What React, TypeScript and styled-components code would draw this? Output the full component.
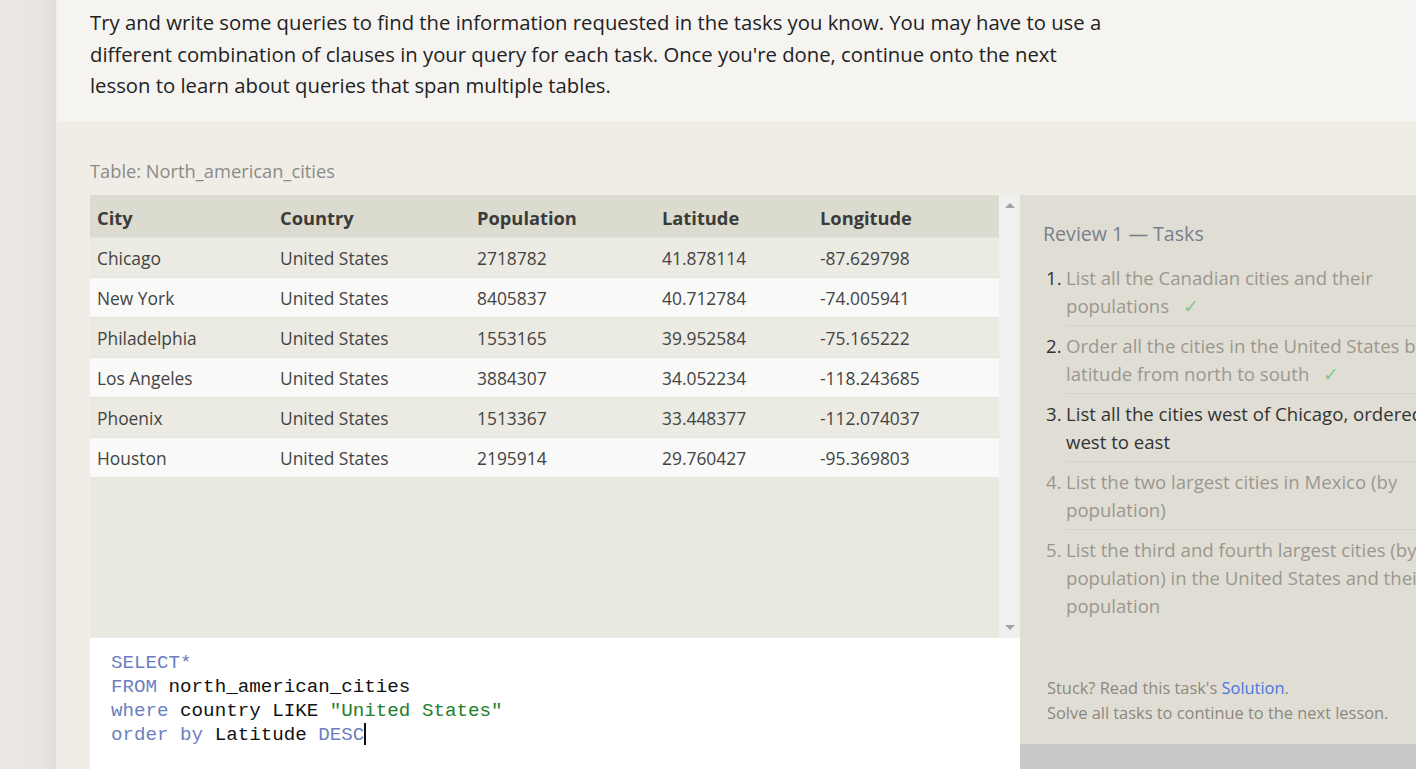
import React from "react";
import styled, { createGlobalStyle } from "styled-components";

const Global = createGlobalStyle`
  html, body { margin: 0; padding: 0; }
  body {
    background: #ebe8e5;
    overflow: hidden;
    font-family: "Open Sans", "Noto Sans", sans-serif;
  }
`;

const Page = styled.div`
  display: flex;
  width: 1416px;
  height: 769px;
  overflow: hidden;
`;

const Gutter = styled.div`
  flex: none;
  width: 56px;
  background: linear-gradient(to right, #ebe8e5 0%, #e8e5e2 70%, #e0dcd9 100%);
  border-right: 1px solid #f2f0ed;
`;

const Main = styled.div`
  flex: 1;
  min-width: 0;
  display: flex;
  flex-direction: column;
`;

const Intro = styled.div`
  background: #f5f4f1;
  padding: 7px 33px 19px 33px;
  height: 95px;
  color: #222;
  font-size: 20.3px;
  line-height: 31.6px;
  white-space: nowrap;
`;

const Exercise = styled.div`
  flex: 1;
  background: #efede6;
  padding: 38px 0 0 33px;
`;

const TableLabel = styled.div`
  color: #8b8b88;
  font-size: 18.3px;
  line-height: 24px;
  margin-bottom: 12px;
`;

const Workspace = styled.div`
  display: flex;
  align-items: flex-start;
  width: 1400px;
`;

const LeftCol = styled.div`
  flex: none;
  width: 930px;
  display: flex;
  flex-direction: column;
`;

const Viewport = styled.div`
  display: flex;
  height: 443px;
  background: #e9e8e1;
`;

const TableArea = styled.div`
  flex: 1;
`;

const Table = styled.table`
  width: 100%;
  border-collapse: collapse;
  table-layout: fixed;
`;

const Th = styled.th<{ $w?: number }>`
  width: ${(p) => (p.$w ? `${p.$w}px` : "auto")};
  background: #dcdbd0;
  height: 43px;
  padding: 2px 0 0 7px;
  text-align: left;
  font-size: 18.3px;
  font-weight: 700;
  color: #3b3b3b;
  box-sizing: border-box;
  white-space: nowrap;
`;

const Tr = styled.tr<{ $odd: boolean }>`
  background: ${(p) => (p.$odd ? "#ebeae3" : "#f9f9f8")};
  border-top: 1px solid #e2e1da;
`;

const Td = styled.td`
  height: 39px;
  padding: 0 0 0 7px;
  font-size: 17.4px;
  color: #444;
  white-space: nowrap;
`;

const Scrollbar = styled.div`
  flex: none;
  width: 21px;
  background: #f0f0f0;
  display: flex;
  flex-direction: column;
  justify-content: space-between;
  align-items: center;
  padding: 8px 0 8px 0;
  box-sizing: border-box;
`;

const Arrow = styled.div<{ $down?: boolean }>`
  width: 0;
  height: 0;
  border-left: 5px solid transparent;
  border-right: 5px solid transparent;
  ${(p) =>
    p.$down
      ? "border-top: 5px solid #a3a3a3;"
      : "border-bottom: 5px solid #a3a3a3;"}
`;

const Editor = styled.div`
  background: #fff;
  height: 160px;
  padding: 13px 21px 12px 21px;
  font-family: "Liberation Mono", "DejaVu Sans Mono", monospace;
  font-size: 19.2px;
  line-height: 24px;
  color: #111;
  white-space: pre;
`;

const Kw = styled.span`
  color: #6b7fc0;
`;

const Str = styled.span`
  color: #23802a;
`;

const Caret = styled.span`
  display: inline-block;
  width: 2px;
  height: 22px;
  background: #111;
  vertical-align: -5px;
`;

const RightCol = styled.div`
  flex: none;
  width: 450px;
  display: flex;
  flex-direction: column;
`;

const TasksPanel = styled.div`
  height: 549px;
  box-sizing: border-box;
  background: #e0ded4;
  padding: 25px 0 19px 23px;
  display: flex;
  flex-direction: column;
`;

const TasksTitle = styled.div`
  font-size: 19.6px;
  line-height: 28px;
  color: #778089;
  margin-bottom: 16px;
`;

const TaskList = styled.ol`
  list-style: none;
  margin: 0;
  padding: 0;
  flex: 1;
`;

const TaskItem = styled.li`
  display: flex;
  margin-top: 6px;
  &:first-child { margin-top: 0; }
`;

const TaskNum = styled.span<{ $dark: boolean }>`
  flex: none;
  width: 20px;
  margin-left: 3px;
  font-size: 18.6px;
  line-height: 28px;
  color: ${(p) => (p.$dark ? "#333" : "#9b978f")};
`;

const TaskBody = styled.div<{ $dark: boolean; $last: boolean }>`
  flex: 1;
  font-size: 18.6px;
  line-height: 28px;
  color: ${(p) => (p.$dark ? "#333" : "#9b978f")};
  white-space: nowrap;
  padding-bottom: 5px;
  border-bottom: ${(p) => (p.$last ? "none" : "1px solid #d4d2c8")};
`;

const Check = styled.span`
  color: #7fcb8c;
  margin-left: 14px;
`;

const Stuck = styled.div`
  padding-left: 4px;
  font-size: 16.4px;
  line-height: 25px;
  color: #8c8780;
`;

const Link = styled.a`
  color: #4677e0;
  text-decoration: none;
`;

const GrayBar = styled.div`
  height: 40px;
  background: #c8c8c8;
`;

const rows = [
  ["Chicago", "United States", "2718782", "41.878114", "-87.629798"],
  ["New York", "United States", "8405837", "40.712784", "-74.005941"],
  ["Philadelphia", "United States", "1553165", "39.952584", "-75.165222"],
  ["Los Angeles", "United States", "3884307", "34.052234", "-118.243685"],
  ["Phoenix", "United States", "1513367", "33.448377", "-112.074037"],
  ["Houston", "United States", "2195914", "29.760427", "-95.369803"],
];

const tasks: { lines: string[]; num: boolean; text: boolean; done: boolean }[] = [
  { lines: ["List all the Canadian cities and their", "populations"], num: true, text: false, done: true },
  { lines: ["Order all the cities in the United States by", "latitude from north to south"], num: true, text: false, done: true },
  { lines: ["List all the cities west of Chicago, ordered from", "west to east"], num: true, text: true, done: false },
  { lines: ["List the two largest cities in Mexico (by", "population)"], num: false, text: false, done: false },
  { lines: ["List the third and fourth largest cities (by", "population) in the United States and their", "population"], num: false, text: false, done: false },
];

export default function App() {
  return (
    <>
      <Global />
      <Page>
        <Gutter />
        <Main>
          <Intro>
            Try and write some queries to find the information requested in the tasks you know. You may have to use a
            <br />
            different combination of clauses in your query for each task. Once you're done, continue onto the next
            <br />
            lesson to learn about queries that span multiple tables.
          </Intro>
          <Exercise>
            <TableLabel>Table: North_american_cities</TableLabel>
            <Workspace>
              <LeftCol>
                <Viewport>
                  <TableArea>
                    <Table>
                      <thead>
                        <tr>
                          <Th $w={183}>City</Th>
                          <Th $w={197}>Country</Th>
                          <Th $w={185}>Population</Th>
                          <Th $w={158}>Latitude</Th>
                          <Th>Longitude</Th>
                        </tr>
                      </thead>
                      <tbody>
                        {rows.map((r, i) => (
                          <Tr key={r[0]} $odd={i % 2 === 0}>
                            {r.map((c, j) => (
                              <Td key={j}>{c}</Td>
                            ))}
                          </Tr>
                        ))}
                      </tbody>
                    </Table>
                  </TableArea>
                  <Scrollbar>
                    <Arrow />
                    <Arrow $down />
                  </Scrollbar>
                </Viewport>
                <Editor>
                  <Kw>SELECT*</Kw>
                  {"\n"}
                  <Kw>FROM</Kw> north_american_cities{"\n"}
                  <Kw>where</Kw> country LIKE <Str>"United States"</Str>
                  {"\n"}
                  <Kw>order by</Kw> Latitude <Kw>DESC</Kw>
                  <Caret />
                </Editor>
              </LeftCol>
              <RightCol>
                <TasksPanel>
                  <TasksTitle>Review 1 — Tasks</TasksTitle>
                  <TaskList>
                    {tasks.map((t, i) => (
                      <TaskItem key={i}>
                        <TaskNum $dark={t.num}>{i + 1}.</TaskNum>
                        <TaskBody $dark={t.text} $last={i === tasks.length - 1}>
                          {t.lines.map((l, k) => (
                            <div key={k}>
                              {l}
                              {t.done && k === t.lines.length - 1 && <Check>✓</Check>}
                            </div>
                          ))}
                        </TaskBody>
                      </TaskItem>
                    ))}
                  </TaskList>
                  <Stuck>
                    Stuck? Read this task's <Link href="#">Solution</Link>.
                    <br />
                    Solve all tasks to continue to the next lesson.
                  </Stuck>
                </TasksPanel>
                <GrayBar />
              </RightCol>
            </Workspace>
          </Exercise>
        </Main>
      </Page>
    </>
  );
}
